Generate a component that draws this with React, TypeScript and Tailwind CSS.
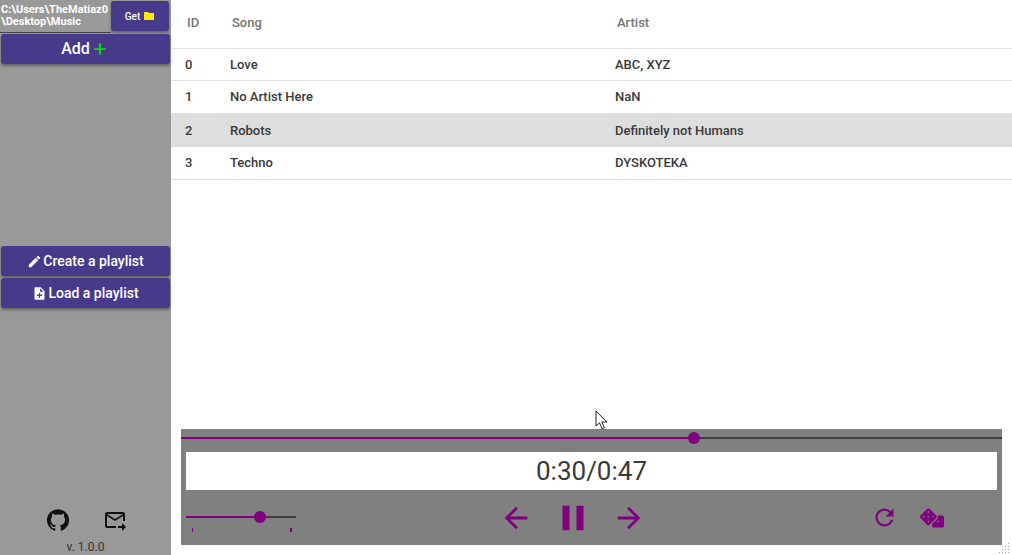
import { FaDice } from "react-icons/fa";
import {
  MdAdd,
  MdArrowBack,
  MdArrowForward,
  MdCreate,
  MdFolder,
  MdForwardToInbox,
  MdNoteAdd,
  MdPause,
  MdRefresh,
} from "react-icons/md";

const songs = [
  { id: 0, name: "Love", artist: "ABC, XYZ", h: "h-[32px]" },
  { id: 1, name: "No Artist Here", artist: "NaN", h: "h-[33px]" },
  { id: 2, name: "Robots", artist: "Definitely not Humans", h: "h-[33px]", active: true },
  { id: 3, name: "Techno", artist: "DYSKOTEKA", h: "h-[33px]" },
];

const SideButton = ({ children, className }: { children: React.ReactNode; className?: string }) => (
  <button
    className={`flex items-center justify-center rounded-[3px] bg-[#483a8b] font-medium text-white shadow-[0_2px_3px_rgba(0,0,0,0.35)] ${className}`}
  >
    {children}
  </button>
);

const GithubIcon = () => (
  <svg viewBox="0 0 24 24" className="h-[24px] w-[24px] fill-[#111]">
    <path d="M12 1.27a11 11 0 00-3.48 21.46c.55.09.73-.28.73-.55v-1.84c-3.03.64-3.67-1.46-3.67-1.46-.55-1.29-1.28-1.65-1.28-1.65-.92-.65.1-.65.1-.65 1.1 0 1.73 1.1 1.73 1.1.92 1.65 2.57 1.2 3.21.92a2 2 0 01.64-1.47c-2.47-.27-5.04-1.19-5.04-5.5 0-1.1.46-2.1 1.2-2.84a3.76 3.76 0 010-2.93s.91-.28 3.11 1.1c1.8-.49 3.7-.49 5.5 0 2.1-1.38 3.02-1.1 3.02-1.1a3.76 3.76 0 010 2.93c.83.74 1.2 1.74 1.2 2.94 0 4.21-2.57 5.13-5.04 5.4.45.37.82.92.82 2.02v3.03c0 .27.1.64.73.55A11 11 0 0012 1.27" />
  </svg>
);

const Sidebar = () => (
  <aside className="flex h-[555px] w-[171px] shrink-0 flex-col bg-[#999999]">
    <div className="flex h-[33px] items-start">
      <div className="h-[33px] w-[111px] border-b border-[#444] pt-[4px] pl-[1px] text-[11px] leading-[12px] font-bold text-white">
        C:\Users\TheMatiaz0
        <br />
        \Desktop\Music
      </div>
      <SideButton className="mt-[1px] h-[30px] w-[58px] gap-[3px] text-[10px]">
        Get <MdFolder className="text-[12px] text-[#ffee00]" />
      </SideButton>
    </div>
    <SideButton className="mt-[1px] ml-[1px] h-[30px] w-[169px] text-[16px]">
      Add
      <MdAdd className="text-[20px] text-[#00ee00]" />
    </SideButton>
    <SideButton className="mt-[182px] ml-[1px] h-[30px] w-[169px] gap-[1px] text-[14px]">
      <MdCreate className="text-[15px]" />
      Create a playlist
    </SideButton>
    <SideButton className="mt-[2px] ml-[1px] h-[30px] w-[169px] gap-[1px] text-[14px]">
      <MdNoteAdd className="text-[15px]" />
      Load a playlist
    </SideButton>
    <div className="mt-auto flex justify-center gap-[33px] pl-[1px]">
      <GithubIcon />
      <MdForwardToInbox className="text-[24px] text-[#111]" />
    </div>
    <div className="mt-[8px] mb-[1px] text-center text-[12px] leading-[14px] text-[#333]">v. 1.0.0</div>
  </aside>
);

const SongTable = () => (
  <div className="text-[13px] font-medium text-[#3a3a3a]">
    <div className="flex h-[49px] items-center border-b border-[#e3e3e3] pb-[2px] text-[#757575]">
      <div className="w-[61px] pl-[16px]">ID</div>
      <div className="w-[385px]">Song</div>
      <div>Artist</div>
    </div>
    {songs.map((song) => (
      <div
        key={song.id}
        className={`flex items-center ${song.h} ${
          song.active ? "bg-[#dedede]" : "border-b border-[#e0e0e0]"
        }`}
      >
        <div className="w-[59px] pl-[14px]">{song.id}</div>
        <div className="w-[385px]">{song.name}</div>
        <div>{song.artist}</div>
      </div>
    ))}
  </div>
);

const Player = () => (
  <div className="mx-[10px] mb-[10px] bg-[#808080]">
    <div className="relative mt-0 h-[23px]">
      <div className="absolute top-[8px] right-0 left-0 h-[2px] bg-[#3d3d3d]" />
      <div className="absolute top-[8px] left-0 h-[2px] w-[513px] bg-[#800080]" />
      <div className="absolute top-[3px] left-[507px] h-[12px] w-[12px] rounded-full bg-[#800080]" />
    </div>
    <div className="mx-[5px] flex h-[38px] items-center justify-center bg-white text-[26px] text-[#3a3a3a]">
      0:30/0:47
    </div>
    <div className="flex h-[55px] items-center">
      <div className="relative ml-[5px] h-[55px] w-[110px]">
        <div className="absolute top-[26px] right-0 left-0 h-[2px] bg-[#3d3d3d]" />
        <div className="absolute top-[26px] left-0 h-[2px] w-[74px] bg-[#800080]" />
        <div className="absolute top-[21px] left-[68px] h-[12px] w-[12px] rounded-full bg-[#800080]" />
        <div className="absolute top-[38px] left-[6px] h-[4px] w-[1px] bg-[#800080]" />
        <div className="absolute top-[38px] left-[104px] h-[4px] w-[2px] bg-[#800080]" />
      </div>
      <MdArrowBack className="ml-[203px] text-[34px] text-[#800080]" />
      <MdPause className="ml-[19px] text-[42px] text-[#800080]" />
      <MdArrowForward className="ml-[18px] text-[34px] text-[#800080]" />
      <MdRefresh className="ml-[225px] text-[27px] text-[#800080]" />
      <FaDice className="ml-[22px] text-[24px] text-[#800080]" />
    </div>
  </div>
);

export default function App() {
  return (
    <div className="relative flex h-[555px] w-[1012px] overflow-hidden bg-white font-['Roboto',sans-serif]">
      <Sidebar />
      <main className="flex min-w-0 flex-1 flex-col justify-between">
        <SongTable />
        <Player />
      </main>
      {/* mouse pointer */}
      <svg viewBox="0 0 14 20" className="absolute top-[410px] left-[595px] h-[20px] w-[14px]">
        <path d="M1 1v15l3.5-3.2 2.6 6 2.3-1-2.6-5.8h5z" fill="#fff" stroke="#222" strokeWidth="1" />
      </svg>
      {/* window resize grip */}
      <svg viewBox="0 0 12 12" className="absolute right-[1px] bottom-[1px] h-[12px] w-[12px] fill-[#9a9ac0]">
        <rect x="9" y="1" width="1" height="1" />
        <rect x="9" y="4" width="1" height="1" />
        <rect x="6" y="4" width="1" height="1" />
        <rect x="9" y="7" width="1" height="1" />
        <rect x="6" y="7" width="1" height="1" />
        <rect x="3" y="7" width="1" height="1" />
        <rect x="9" y="10" width="1" height="1" />
        <rect x="6" y="10" width="1" height="1" />
        <rect x="3" y="10" width="1" height="1" />
        <rect x="0" y="10" width="1" height="1" />
      </svg>
    </div>
  );
}
